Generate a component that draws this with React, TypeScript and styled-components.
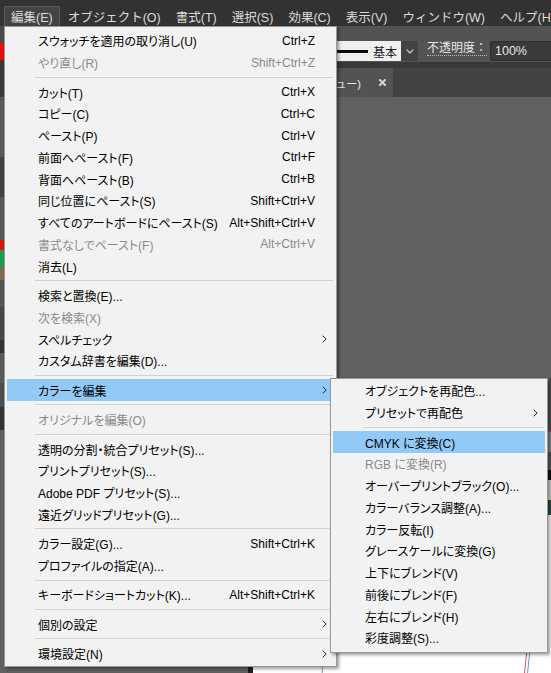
import React from "react";
import styled, { createGlobalStyle } from "styled-components";

const GlobalStyle = createGlobalStyle`
  html, body { margin: 0; padding: 0; background: #606060; }
  body { width: 551px; height: 673px; overflow: hidden; }
  * { box-sizing: border-box; }
`;

const Page = styled.div`
  position: relative;
  width: 551px;
  height: 673px;
  overflow: hidden;
  display: flex;
  flex-direction: column;
  background: #606060;
  font-family: "Liberation Sans", "Noto Sans CJK JP", sans-serif;
`;

/* ---------- menu bar ---------- */
const MenuBar = styled.div`
  height: 26px;
  flex: none;
  display: flex;
  align-items: flex-end;
  gap: 1px;
  padding-left: 4px;
  background: #323232;
  overflow: hidden;
`;

const BarItem = styled.div<{ $open?: boolean }>`
  height: 20px;
  padding: 0 6px;
  flex: none;
  display: flex;
  align-items: center;
  font-size: 12.5px;
  color: #dcdcdc;
  white-space: nowrap;
  background: ${(p) => (p.$open ? "#434343" : "transparent")};
  border: 1px solid ${(p) => (p.$open ? "#5a5a5a" : "transparent")};
  border-bottom: none;
`;

/* ---------- body ---------- */
const Body = styled.div`
  flex: 1;
  display: flex;
  min-height: 0;
`;

const LeftDock = styled.div`
  width: 4px;
  flex: none;
  display: flex;
  flex-direction: column;
`;

const Stripe = styled.div<{ $color: string; $h?: number }>`
  background: ${(p) => p.$color};
  height: ${(p) => (p.$h ? `${p.$h}px` : "auto")};
  flex: ${(p) => (p.$h ? "none" : "1")};
`;

const MainColumn = styled.div`
  flex: 1;
  display: flex;
  flex-direction: column;
  min-width: 0;
`;

const ControlBar = styled.div`
  height: 36px;
  flex: none;
  display: flex;
  align-items: flex-end;
  padding: 0 0 1px 296px;
  background: #535353;
`;

const StrokePreview = styled.div`
  width: 101px;
  height: 20px;
  flex: none;
  display: flex;
  align-items: center;
  padding-right: 4px;
  background: #f0f0f0;
  font-size: 12px;
  color: #1a1a1a;
`;

const StrokeLine = styled.div`
  flex: 1;
  height: 3px;
  background: #0c0c0c;
  margin-right: 5px;
`;

const DropButton = styled.div`
  width: 17px;
  height: 20px;
  flex: none;
  display: flex;
  align-items: center;
  justify-content: center;
  background: #424242;
`;

const OpacityLabel = styled.div`
  margin-left: 9px;
  align-self: center;
  margin-top: 10px;
  font-size: 12px;
  line-height: 14px;
  color: #e8e8e8;
  border-bottom: 1px dotted #b8b8b8;
  white-space: nowrap;
`;

const OpacityInput = styled.div`
  margin-left: 3px;
  width: 80px;
  height: 20px;
  flex: none;
  display: flex;
  align-items: center;
  padding-left: 4px;
  background: #3a3a3a;
  border: 1px solid #2e2e2e;
  border-radius: 2px;
  font-size: 12.5px;
  color: #e6e6e6;
`;

const DarkGap = styled.div`
  height: 6px;
  flex: none;
  background: #383838;
`;

const TabBar = styled.div`
  height: 29px;
  flex: none;
  display: flex;
  background: #434343;
`;

const DocTab = styled.div`
  width: 389px;
  display: flex;
  align-items: center;
  justify-content: flex-end;
  gap: 18px;
  padding-right: 7px;
  background: #535353;
  overflow: hidden;
`;

const TabLabel = styled.span`
  font-size: 11px;
  color: #ececec;
  white-space: nowrap;
`;

const Canvas = styled.div`
  flex: 1;
  position: relative;
  overflow: hidden;
  background: #606060;
`;

const Artboard = styled.div`
  position: absolute;
  left: 244px;
  top: 281px;
  width: 420px;
  height: 420px;
  background: #ffffff;
  border-left: 5px solid #2a1c1c;
`;

/* ---------- dropdown menus ---------- */
const Menu = styled.div<{ $left: number; $top: number; $width: number; $pad: string }>`
  position: absolute;
  left: ${(p) => p.$left}px;
  top: ${(p) => p.$top}px;
  width: ${(p) => p.$width}px;
  padding: ${(p) => p.$pad};
  display: flex;
  flex-direction: column;
  background: #f2f2f2;
  border: 1px solid #989898;
  box-shadow: 2px 2px 3px rgba(0, 0, 0, 0.38);
  font-family: "Liberation Sans", "Noto Sans CJK JP", sans-serif;
  font-feature-settings: "palt";
  z-index: 10;
`;

const Item = styled.div<{ $active?: boolean; $disabled?: boolean; $indent: number }>`
  display: grid;
  grid-template-columns: 1fr auto 19px;
  align-items: center;
  height: 21.75px;
  padding-left: ${(p) => p.$indent}px;
  background: ${(p) => (p.$active ? "#91c9f7" : "transparent")};
  color: ${(p) => (p.$disabled ? "#8a8a8a" : "#000000")};
  font-size: 12px;
  white-space: nowrap;
`;

const Label = styled.span``;

const Shortcut = styled.span`
  text-align: right;
`;

const ArrowCell = styled.span`
  display: flex;
  justify-content: center;
  align-items: center;
`;

const Separator = styled.div<{ $inset: number }>`
  height: 1px;
  margin: 3.2px 1px 3.5px ${(p) => p.$inset}px;
  background: #d2d2d2;
`;

type Entry =
  | { label: string; shortcut?: string; disabled?: boolean; submenu?: boolean; active?: boolean }
  | "sep";

const editMenu: Entry[] = [
  { label: "スウォッチを適用の取り消し(U)", shortcut: "Ctrl+Z" },
  { label: "やり直し(R)", shortcut: "Shift+Ctrl+Z", disabled: true },
  "sep",
  { label: "カット(T)", shortcut: "Ctrl+X" },
  { label: "コピー(C)", shortcut: "Ctrl+C" },
  { label: "ペースト(P)", shortcut: "Ctrl+V" },
  { label: "前面へペースト(F)", shortcut: "Ctrl+F" },
  { label: "背面へペースト(B)", shortcut: "Ctrl+B" },
  { label: "同じ位置にペースト(S)", shortcut: "Shift+Ctrl+V" },
  { label: "すべてのアートボードにペースト(S)", shortcut: "Alt+Shift+Ctrl+V" },
  { label: "書式なしでペースト(F)", shortcut: "Alt+Ctrl+V", disabled: true },
  { label: "消去(L)" },
  "sep",
  { label: "検索と置換(E)..." },
  { label: "次を検索(X)", disabled: true },
  { label: "スペルチェック", submenu: true },
  { label: "カスタム辞書を編集(D)..." },
  "sep",
  { label: "カラーを編集", submenu: true, active: true },
  "sep",
  { label: "オリジナルを編集(O)", disabled: true },
  "sep",
  { label: "透明の分割・統合プリセット(S)..." },
  { label: "プリントプリセット(S)..." },
  { label: "Adobe PDF プリセット(S)..." },
  { label: "遠近グリッドプリセット(G)..." },
  "sep",
  { label: "カラー設定(G)...", shortcut: "Shift+Ctrl+K" },
  { label: "プロファイルの指定(A)..." },
  "sep",
  { label: "キーボードショートカット(K)...", shortcut: "Alt+Shift+Ctrl+K" },
  "sep",
  { label: "個別の設定", submenu: true },
  "sep",
  { label: "環境設定(N)", submenu: true },
];

const colorMenu: Entry[] = [
  { label: "オブジェクトを再配色..." },
  { label: "プリセットで再配色", submenu: true },
  "sep",
  { label: "CMYK に変換(C)", active: true },
  { label: "RGB に変換(R)", disabled: true },
  { label: "オーバープリントブラック(O)..." },
  { label: "カラーバランス調整(A)..." },
  { label: "カラー反転(I)" },
  { label: "グレースケールに変換(G)" },
  { label: "上下にブレンド(V)" },
  { label: "前後にブレンド(F)" },
  { label: "左右にブレンド(H)" },
  { label: "彩度調整(S)..." },
];

const RightChevron = () => (
  <svg width="5" height="8" viewBox="0 0 5 8">
    <path d="M0.7 0.7 L4.2 4 L0.7 7.3" fill="none" stroke="#2b2b2b" strokeWidth="1" />
  </svg>
);

const DownChevron = () => (
  <svg width="8" height="5" viewBox="0 0 8 5">
    <path d="M0.7 0.7 L4 4 L7.3 0.7" fill="none" stroke="#d8d8d8" strokeWidth="1.2" />
  </svg>
);

const CloseIcon = () => (
  <svg width="7" height="7" viewBox="0 0 7 7">
    <path d="M1 1 L6 6 M6 1 L1 6" stroke="#d4d4d4" strokeWidth="2" strokeLinecap="square" />
  </svg>
);

const MenuList = ({ entries, indent, sepInset }: { entries: Entry[]; indent: number; sepInset: number }) => (
  <>
    {entries.map((e, i) =>
      e === "sep" ? (
        <Separator key={i} $inset={sepInset} />
      ) : (
        <Item key={i} $indent={indent} $active={e.active} $disabled={e.disabled}>
          <Label>{e.label}</Label>
          <Shortcut>{e.shortcut ?? ""}</Shortcut>
          <ArrowCell>{e.submenu ? <RightChevron /> : null}</ArrowCell>
        </Item>
      )
    )}
  </>
);

const ArtDrawing = () => (
  <svg width="420" height="420" viewBox="0 0 420 420" style={{ display: "block" }}>
    <rect x="295" y="0" width="30" height="52" fill="#4f4f4f" />
    <rect x="295" y="52" width="30" height="2" fill="#d22" />
    <rect x="295" y="54" width="30" height="20" fill="#858585" />
    <rect x="295" y="74" width="30" height="18" fill="#555" />
    <rect x="295" y="92" width="30" height="10" fill="#111" />
    <rect x="295" y="102" width="30" height="20" fill="#cfcfcf" />
    <rect x="295" y="122" width="30" height="15" fill="#1e4f4a" />
    <line x1="70" y1="270" x2="69" y2="300" stroke="#5aa0e0" strokeWidth="1" />
    <line x1="274" y1="272" x2="271" y2="300" stroke="#e05050" strokeWidth="1" />
    <line x1="277" y1="272" x2="274" y2="300" stroke="#5aa0e0" strokeWidth="1" />
  </svg>
);

export default function App() {
  return (
    <>
      <GlobalStyle />
      <Page>
        <MenuBar>
          <BarItem $open>編集(E)</BarItem>
          <BarItem>オブジェクト(O)</BarItem>
          <BarItem>書式(T)</BarItem>
          <BarItem>選択(S)</BarItem>
          <BarItem>効果(C)</BarItem>
          <BarItem>表示(V)</BarItem>
          <BarItem>ウィンドウ(W)</BarItem>
          <BarItem>ヘルプ(H)</BarItem>
        </MenuBar>
        <Body>
          <LeftDock>
            <Stripe $color="#4a4a4a" $h={17} />
            <Stripe $color="#e01010" $h={17} />
            <Stripe $color="#3a3a3a" $h={37} />
            <Stripe $color="#5a5a5a" $h={60} />
            <Stripe $color="#424242" $h={40} />
            <Stripe $color="#585858" $h={43} />
            <Stripe $color="#d01818" $h={10} />
            <Stripe $color="#1f9a4a" $h={17} />
            <Stripe $color="#7d6b55" $h={13} />
            <Stripe $color="#555555" $h={27} />
            <Stripe $color="#474747" $h={33} />
            <Stripe $color="#333333" $h={13} />
            <Stripe $color="#5a5a5a" $h={30} />
            <Stripe $color="#4e4e4e" $h={24} />
            <Stripe $color="#333333" $h={23} />
            <Stripe $color="#5f5f5f" />
          </LeftDock>
          <MainColumn>
            <ControlBar>
              <StrokePreview>
                <StrokeLine />
                基本
              </StrokePreview>
              <DropButton>
                <DownChevron />
              </DropButton>
              <OpacityLabel>不透明度：</OpacityLabel>
              <OpacityInput>100%</OpacityInput>
            </ControlBar>
            <DarkGap />
            <TabBar>
              <DocTab>
                <TabLabel>(CMYK/GPU プレビュー)</TabLabel>
                <CloseIcon />
              </DocTab>
            </TabBar>
            <Canvas>
              <Artboard>
                <ArtDrawing />
              </Artboard>
            </Canvas>
          </MainColumn>
        </Body>

        <Menu $left={4} $top={26} $width={333} $pad="3px 2px 1px 2px">
          <MenuList entries={editMenu} indent={31} sepInset={28} />
        </Menu>
        <Menu $left={330} $top={378} $width={218} $pad="1px 2px 3px 2px">
          <MenuList entries={colorMenu} indent={32} sepInset={30} />
        </Menu>
      </Page>
    </>
  );
}
